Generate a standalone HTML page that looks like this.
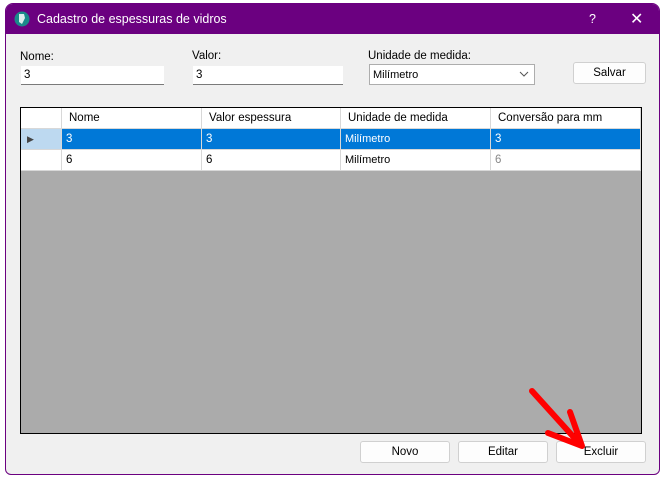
<!DOCTYPE html>
<html><head><style>
body{margin:0;width:663px;height:480px;background:#fff;position:relative;overflow:hidden;font-family:"Liberation Sans",sans-serif;font-size:11.5px;color:#000}
.a{position:absolute}
.win{left:5px;top:3px;width:653px;height:470px;border:1px solid #6b0080;border-radius:8px 8px 6px 6px;background:#f0f0f0;overflow:hidden}
.title{left:0;top:0;width:653px;height:30px;background:#6b0080;color:#fff;font-size:12.5px}
.tb{background:#fff;border-bottom:1px solid #7a7a7a;height:18px;line-height:18px;padding-left:3px}
.btn{background:#fdfdfd;border:1px solid #d0d0d0;border-radius:3px;text-align:center;line-height:20px;height:20px}
.cell{position:absolute;height:21px;line-height:21px;padding-left:4px;box-sizing:border-box;border-right:1px solid #d8d8d8;border-bottom:1px solid #d8d8d8;overflow:hidden;white-space:nowrap}
</style></head><body>
<div class="a win">
 <div class="a title">
  <svg class="a" style="left:8px;top:7px" width="16" height="16"><circle cx="8" cy="8" r="7.5" fill="#1a8a8a"/><path d="M5 3 L10 3 L11 7 L8 13 L5 11 Z" fill="#fff" opacity=".85"/></svg>
  <div class="a" style="left:31px;top:8px">Cadastro de espessuras de vidros</div>
  <div class="a" style="left:583px;top:8px">?</div>
  <div class="a" style="left:624px;top:5px;font-size:16px">✕</div>
 </div>
</div>
<div class="a" style="left:20px;top:51px">Nome:</div>
<div class="a" style="left:192px;top:50px">Valor:</div>
<div class="a" style="left:368px;top:50px">Unidade de medida:</div>
<div class="a tb" style="left:21px;top:66px;width:140px">3</div>
<div class="a tb" style="left:193px;top:66px;width:147px">3</div>
<div class="a" style="left:369px;top:64px;width:164px;height:19px;background:#fff;border:1px solid #adadad;line-height:20px;font-size:11px"><span style="padding-left:3px">Milímetro</span>
<svg class="a" style="right:5px;top:6px" width="10" height="6"><path d="M1 1 L5 5 L9 1" stroke="#555" fill="none"/></svg></div>
<div class="a btn" style="left:573px;top:62px;width:71px">Salvar</div>
<div class="a" style="left:20px;top:107px;width:620px;height:325px;border:1px solid #000;background:#ababab">
 <div class="cell" style="left:0;top:0;width:41px;background:#fff"></div>
 <div class="cell" style="left:41px;top:0;width:140px;background:#fff;padding-left:7px">Nome</div>
 <div class="cell" style="left:181px;top:0;width:139px;background:#fff;padding-left:7px">Valor espessura</div>
 <div class="cell" style="left:320px;top:0;width:150px;background:#fff;padding-left:7px">Unidade de medida</div>
 <div class="cell" style="left:470px;top:0;width:150px;background:#fff;padding-left:7px">Conversão para mm</div>
 <div class="cell" style="left:0;top:21px;width:41px;background:#bdd9f0;color:#444;padding-left:6px;font-size:9px">▶</div>
 <div class="cell" style="left:41px;top:21px;width:140px;background:#0078d7;color:#fff">3</div>
 <div class="cell" style="left:181px;top:21px;width:139px;background:#0078d7;color:#fff">3</div>
 <div class="cell" style="left:320px;top:21px;width:150px;background:#0078d7;color:#fff;font-size:11px">Milímetro</div>
 <div class="cell" style="left:470px;top:21px;width:150px;background:#0078d7;color:#fff">3</div>
 <div class="cell" style="left:0;top:42px;width:41px;background:#fff"></div>
 <div class="cell" style="left:41px;top:42px;width:140px;background:#fff">6</div>
 <div class="cell" style="left:181px;top:42px;width:139px;background:#fff">6</div>
 <div class="cell" style="left:320px;top:42px;width:150px;background:#fff;font-size:11px">Milímetro</div>
 <div class="cell" style="left:470px;top:42px;width:150px;background:#fff;color:#888">6</div>
</div>
<div class="a btn" style="left:360px;top:441px;width:88px">Novo</div>
<div class="a btn" style="left:458px;top:441px;width:88px">Editar</div>
<div class="a btn" style="left:556px;top:441px;width:88px">Excluir</div>
<svg class="a" style="left:0;top:0" width="663" height="480"><path d="M532 391 L579 443" stroke="#f00" stroke-width="6" stroke-linecap="round"/><path d="M548 433 L582 446 L570 412" stroke="#f00" stroke-width="6" fill="none" stroke-linecap="round" stroke-linejoin="round"/></svg>
</body></html>
